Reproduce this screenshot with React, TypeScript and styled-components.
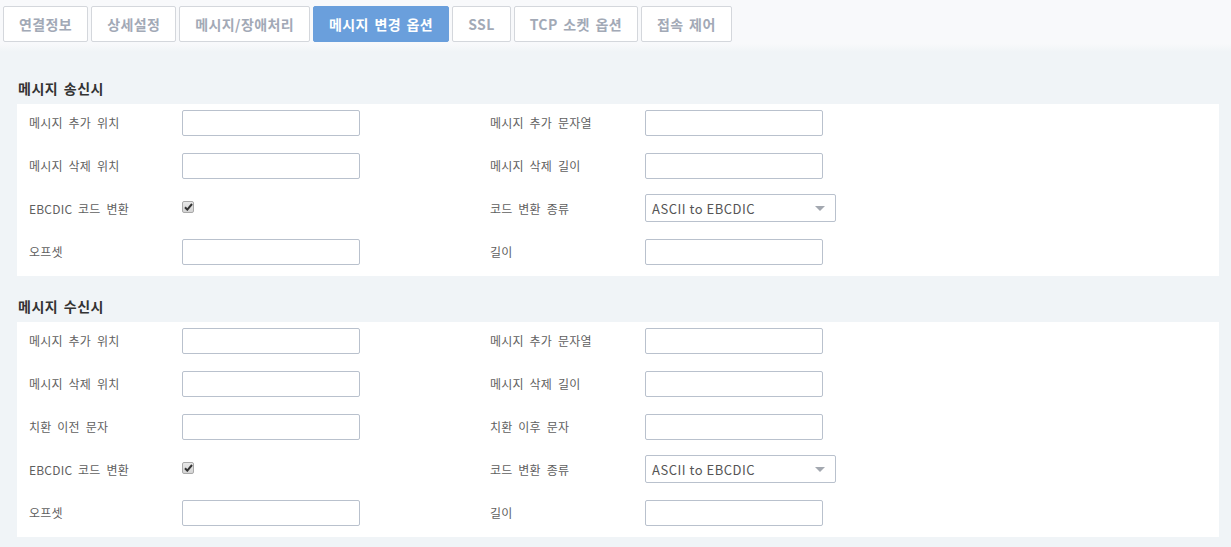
import React from 'react'
import styled, { createGlobalStyle } from 'styled-components'

const GlobalStyle = createGlobalStyle`
    html, body {
        margin: 0;
        padding: 0;
        background: #f0f4f7;
    }
    body {
        font-family: "Noto Sans CJK KR", "Noto Sans", sans-serif;
        color: #555;
    }
`

type Field = { label: string; kind: 'input' | 'check' | 'select' }

const tabs = ['연결정보', '상세설정', '메시지/장애처리', '메시지 변경 옵션', 'SSL', 'TCP 소켓 옵션', '접속 제어']

const sendRows: [Field, Field][] = [
    [{ label: '메시지 추가 위치', kind: 'input' }, { label: '메시지 추가 문자열', kind: 'input' }],
    [{ label: '메시지 삭제 위치', kind: 'input' }, { label: '메시지 삭제 길이', kind: 'input' }],
    [{ label: 'EBCDIC 코드 변환', kind: 'check' }, { label: '코드 변환 종류', kind: 'select' }],
    [{ label: '오프셋', kind: 'input' }, { label: '길이', kind: 'input' }],
]

const recvRows: [Field, Field][] = [
    [{ label: '메시지 추가 위치', kind: 'input' }, { label: '메시지 추가 문자열', kind: 'input' }],
    [{ label: '메시지 삭제 위치', kind: 'input' }, { label: '메시지 삭제 길이', kind: 'input' }],
    [{ label: '치환 이전 문자', kind: 'input' }, { label: '치환 이후 문자', kind: 'input' }],
    [{ label: 'EBCDIC 코드 변환', kind: 'check' }, { label: '코드 변환 종류', kind: 'select' }],
    [{ label: '오프셋', kind: 'input' }, { label: '길이', kind: 'input' }],
]

const Control = ({ kind, col }: { kind: Field['kind']; col: number }) => {
    if (kind === 'check') {
        return (
            <CheckCell col={col}>
                <CheckBox>
                    <svg width="9" height="8" viewBox="0 0 9 8">
                        <path d="M1 4.2 L3.3 6.6 L8 1" fill="none" stroke="#333" strokeWidth="2" />
                    </svg>
                </CheckBox>
            </CheckCell>
        )
    }
    if (kind === 'select') {
        return (
            <SelectBox col={col}>
                <span>ASCII to EBCDIC</span>
                <Caret />
            </SelectBox>
        )
    }
    return <TextInput type="text" col={col} />
}

const Section = ({ title, rows }: { title: string; rows: [Field, Field][] }) => (
    <>
        <SectionTitle>{title}</SectionTitle>
        <Panel>
            {rows.map(([a, b], i) => (
                <Row key={i}>
                    <Label col={1}>{a.label}</Label>
                    <Control kind={a.kind} col={2} />
                    <Label col={4}>{b.label}</Label>
                    <Control kind={b.kind} col={5} />
                </Row>
            ))}
        </Panel>
    </>
)

const App = () => {
    const active = 3
    return (
        <Page>
            <GlobalStyle />
            <TabBar>
                {tabs.map((t, i) => (
                    <Tab key={t} active={i === active}>{t}</Tab>
                ))}
            </TabBar>
            <Content>
                <Section title="메시지 송신시" rows={sendRows} />
                <Section title="메시지 수신시" rows={recvRows} />
            </Content>
        </Page>
    )
}

export default App

const Page = styled.div`
    width: 1231px;
    min-height: 547px;
    background: #f0f4f7;
`

const TabBar = styled.div`
    display: flex;
    gap: 3px;
    padding: 6px 0 0 3px;
    box-sizing: border-box;
    background: linear-gradient(to bottom, #f8f9fb 0px, #f8f9fb 44px, #f0f4f7 52px);
    height: 52px;
`

const Tab = styled.div<{ active?: boolean }>`
    height: 36px;
    box-sizing: border-box;
    padding: 0 15px;
    display: flex;
    align-items: center;
    border: 1px solid ${p => (p.active ? '#6a9fdc' : '#d4d7dc')};
    border-radius: 2px;
    background: ${p => (p.active ? '#6a9fdc' : '#ffffff')};
    color: ${p => (p.active ? '#ffffff' : '#a2a9b6')};
    font-size: 14px;
    font-weight: bold;
    word-spacing: 2px;
    letter-spacing: 0.4px;
    white-space: nowrap;
`

const Content = styled.div`
    padding: 6px 12px 11px 17px;
`

const SectionTitle = styled.div`
    margin-top: 20px;
    margin-bottom: 6px;
    padding-left: 1px;
    line-height: 20px;
    font-size: 14px;
    font-weight: bold;
    word-spacing: 2px;
    letter-spacing: 0.5px;
    color: #333;
`

const Panel = styled.div`
    background: #ffffff;
    padding: 6px 12px 11px 12px;
    display: flex;
    flex-direction: column;
    gap: 17px;
`

const Row = styled.div`
    display: grid;
    grid-template-columns: 153px 178px 130px 155px auto;
    align-items: center;
    height: 26px;
`

const Label = styled.div<{ col: number }>`
    grid-column: ${p => p.col};
    margin-top: -2px;
    font-size: 12px;
    color: #5f5f5f;
    word-spacing: 3px;
    letter-spacing: 0.2px;
    white-space: nowrap;
`

const TextInput = styled.input<{ col: number }>`
    grid-column: ${p => p.col};
    width: 178px;
    height: 26px;
    box-sizing: border-box;
    border: 1px solid #b9c1cd;
    border-radius: 2px;
    background: #fff;
    margin: 0;
    padding: 0 6px;
`

const CheckCell = styled.div<{ col: number }>`
    grid-column: ${p => p.col};
    display: flex;
    align-items: center;
    height: 26px;
    margin-top: -5px;
`

const CheckBox = styled.div`
    width: 12px;
    height: 12px;
    box-sizing: border-box;
    border: 1px solid #a9a9a9;
    border-radius: 2px;
    background: linear-gradient(#e8e8e8, #d4d4d4);
    display: flex;
    align-items: center;
    justify-content: center;
`

const SelectBox = styled.div<{ col: number }>`
    grid-column: ${p => p.col};
    width: 191px;
    height: 28px;
    margin-top: -2px;
    box-sizing: border-box;
    border: 1px solid #b9c1cd;
    border-radius: 2px;
    background: #fff;
    display: flex;
    align-items: center;
    justify-content: space-between;
    padding: 0 10px 0 6px;
    font-size: 13px;
    letter-spacing: 0.5px;
    color: #555;
`

const Caret = styled.span`
    width: 0;
    height: 0;
    border-left: 5px solid transparent;
    border-right: 5px solid transparent;
    border-top: 5px solid #a3a8b0;
`
